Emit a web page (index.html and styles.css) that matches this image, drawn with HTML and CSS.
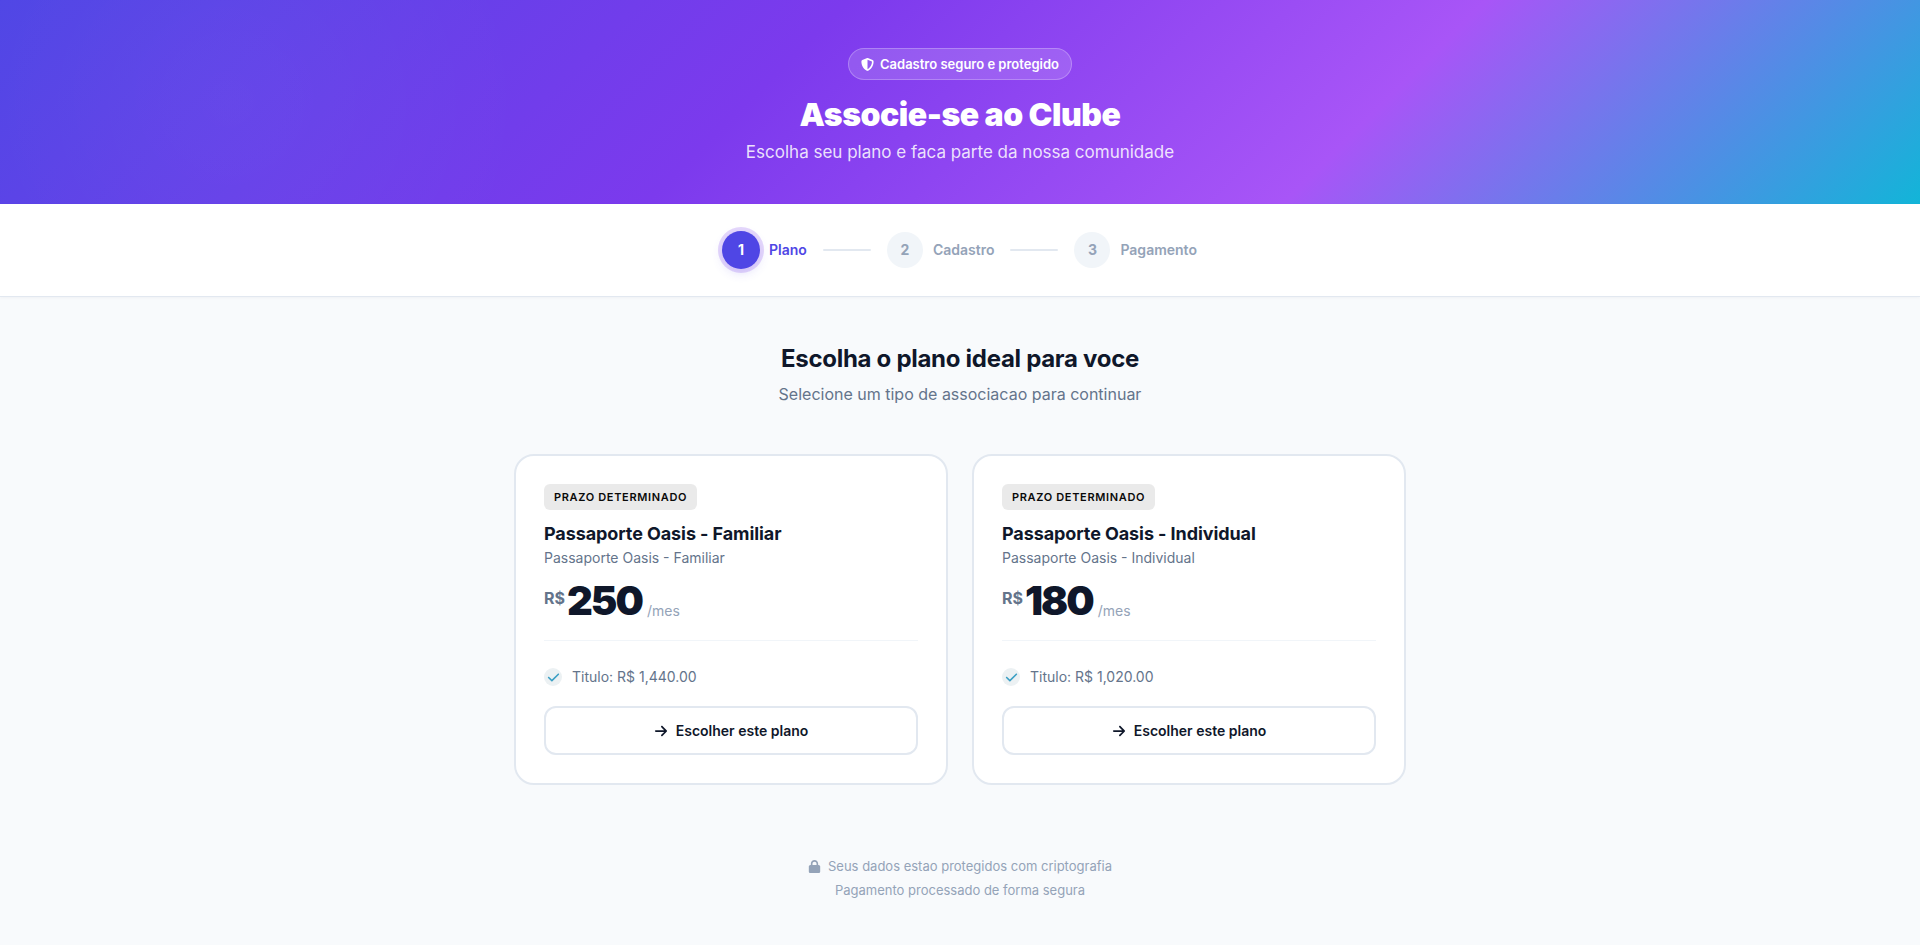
FILE: index.html
```html
<!DOCTYPE html>
<html lang="pt-BR">
<head>
  <meta charset="UTF-8">
  <meta name="viewport" content="width=device-width, initial-scale=1.0">
  <title>Associe-se ao Clube</title>
  <link rel="stylesheet" href="styles.css">
</head>
<body>
  <!-- icones reutilizados -->
  <svg class="sprite" aria-hidden="true">
    <symbol id="i-shield" viewBox="0 0 512 512"><path d="M256 0c4.6 0 9.2 1 13.4 2.9L457.7 82.8c22 9.3 38.4 31 38.3 57.2c-.5 99.2-41.3 280.7-213.6 363.2c-16.7 8-36.1 8-52.8 0C57.3 420.7 16.5 239.2 16 140c-.1-26.2 16.3-47.9 38.3-57.2L242.7 2.9C246.8 1 251.4 0 256 0zm0 66.8V444.8C394 378 431.1 230.1 432 141.4L256 66.8z"/></symbol>
    <symbol id="i-check" viewBox="0 0 448 512"><path d="M438.6 105.4c12.5 12.5 12.5 32.8 0 45.3l-256 256c-12.5 12.5-32.8 12.5-45.3 0l-128-128c-12.5-12.5-12.5-32.8 0-45.3s32.8-12.5 45.3 0L160 338.7 393.4 105.4c12.5-12.5 32.8-12.5 45.3 0z"/></symbol>
    <symbol id="i-arrow" viewBox="0 0 448 512"><path d="M438.6 278.6c12.5-12.5 12.5-32.8 0-45.3l-160-160c-12.5-12.5-32.8-12.5-45.3 0s-12.5 32.8 0 45.3L338.8 224 32 224c-17.7 0-32 14.3-32 32s14.3 32 32 32l306.7 0L233.4 393.4c-12.5 12.5-12.5 32.8 0 45.3s32.8 12.5 45.3 0l160-160z"/></symbol>
    <symbol id="i-lock" viewBox="0 0 448 512"><path d="M144 144v48H304V144c0-44.2-35.8-80-80-80s-80 35.8-80 80zM80 192V144C80 64.5 144.5 0 224 0s144 64.5 144 144v48h16c35.3 0 64 28.7 64 64V448c0 35.3-28.7 64-64 64H64c-35.3 0-64-28.7-64-64V256c0-35.3 28.7-64 64-64H80z"/></symbol>
  </svg>

  <header class="hero">
    <div class="hero-badge">
      <svg class="icon"><use href="#i-shield"/></svg>
      <span>Cadastro seguro e protegido</span>
    </div>
    <h1>Associe-se ao Clube</h1>
    <p>Escolha seu plano e faca parte da nossa comunidade</p>
  </header>

  <nav class="steps" aria-label="Etapas">
    <div class="step active">
      <span class="step-number">1</span>
      <span class="step-label">Plano</span>
    </div>
    <div class="step-line"></div>
    <div class="step">
      <span class="step-number">2</span>
      <span class="step-label">Cadastro</span>
    </div>
    <div class="step-line"></div>
    <div class="step">
      <span class="step-number">3</span>
      <span class="step-label">Pagamento</span>
    </div>
  </nav>

  <main class="container">
    <div class="section-title">
      <h2>Escolha o plano ideal para voce</h2>
      <p>Selecione um tipo de associacao para continuar</p>
    </div>

    <div class="plans">
      <article class="plan">
        <span class="plan-type">Prazo determinado</span>
        <h3>Passaporte Oasis - Familiar</h3>
        <p class="plan-desc">Passaporte Oasis - Familiar</p>
        <div class="price">
          <span class="currency">R$</span>
          <span class="value">250</span>
          <span class="period">/mes</span>
        </div>
        <ul class="features">
          <li><span class="check"><svg class="icon"><use href="#i-check"/></svg></span>Titulo: R$ 1,440.00</li>
        </ul>
        <button type="button" class="btn"><svg class="icon"><use href="#i-arrow"/></svg>Escolher este plano</button>
      </article>

      <article class="plan">
        <span class="plan-type">Prazo determinado</span>
        <h3>Passaporte Oasis - Individual</h3>
        <p class="plan-desc">Passaporte Oasis - Individual</p>
        <div class="price">
          <span class="currency">R$</span>
          <span class="value">180</span>
          <span class="period">/mes</span>
        </div>
        <ul class="features">
          <li><span class="check"><svg class="icon"><use href="#i-check"/></svg></span>Titulo: R$ 1,020.00</li>
        </ul>
        <button type="button" class="btn"><svg class="icon"><use href="#i-arrow"/></svg>Escolher este plano</button>
      </article>
    </div>
  </main>

  <footer class="footer">
    <p><svg class="icon"><use href="#i-lock"/></svg>Seus dados estao protegidos com criptografia</p>
    <p>Pagamento processado de forma segura</p>
  </footer>
</body>
</html>
```
FILE: styles.css
```css
* {
  margin: 0;
  padding: 0;
  box-sizing: border-box;
}
body {
  font-family: Inter, "Liberation Sans", sans-serif;
  background: #f8fafc;
  color: #0f172a;
  line-height: 24px;
}
.sprite {
  display: none;
}
.icon {
  width: 13px;
  height: 13px;
  fill: currentColor;
  flex-shrink: 0;
}

/* topo */
.hero {
  display: flex;
  flex-direction: column;
  align-items: center;
  padding: 48px 24px 40px;
  background:
    radial-gradient(circle at 12% 50%, rgba(255, 255, 255, 0.03), transparent 300px),
    linear-gradient(135deg, #4f46e5 0%, #7c3aed 40%, #a855f7 70%, #12b5d8 100%);
  color: #fff;
  text-align: center;
}
.hero-badge {
  display: flex;
  align-items: center;
  gap: 6px;
  height: 32px;
  padding: 0 12px;
  margin-bottom: 14px;
  border: 1px solid rgba(255, 255, 255, 0.25);
  border-radius: 16px;
  background: rgba(255, 255, 255, 0.15);
  font-size: 13px;
  font-weight: 600;
}
.hero h1 {
  font-size: 32px;
  line-height: 42px;
  font-weight: 900;
  letter-spacing: -0.015em;
  margin-bottom: 4px;
}
.hero p {
  font-size: 17px;
  color: rgba(255, 255, 255, 0.85);
}

/* etapas */
.steps {
  display: flex;
  justify-content: center;
  align-items: center;
  gap: 16px;
  padding: 28px 24px;
  background: #fff;
  border-bottom: 1px solid #e2e8f0;
  box-shadow: 0 1px 3px rgba(15, 23, 42, 0.04);
}
.step {
  display: flex;
  align-items: center;
  gap: 10px;
  color: #94a3b8;
  font-size: 14px;
  font-weight: 600;
}
.step-number {
  width: 36px;
  height: 36px;
  line-height: 36px;
  border-radius: 50%;
  background: #f1f5f9;
  text-align: center;
  font-weight: 700;
}
.step.active {
  color: #4f46e5;
}
.step.active .step-number {
  background: #4f46e5;
  color: #fff;
  box-shadow: 0 0 0 1px #4f46e5, 0 0 0 5px rgba(124, 58, 237, 0.2), 0 4px 12px rgba(79, 70, 229, 0.2);
}
.step-line {
  width: 48px;
  height: 2px;
  border-radius: 1px;
  background: #e2e8f0;
}

/* planos */
.container {
  max-width: 940px;
  margin: 0 auto;
  padding: 44px 24px 0;
}
.section-title {
  text-align: center;
  margin-bottom: 48px;
}
.section-title h2 {
  font-size: 24px;
  line-height: 36px;
  font-weight: 700;
  letter-spacing: -0.012em;
  margin-bottom: 5px;
}
.section-title p {
  font-size: 16px;
  color: #64748b;
}
.plans {
  display: grid;
  grid-template-columns: 1fr 1fr;
  gap: 24px;
}
.plan {
  display: flex;
  flex-direction: column;
  padding: 28px;
  background: #fff;
  border: 2px solid #e2e8f0;
  border-radius: 20px;
}
.plan-type {
  align-self: flex-start;
  padding: 4px 10px;
  margin-bottom: 12px;
  border-radius: 6px;
  background: #eaeaea;
  color: #0a0a0a;
  font-size: 11px;
  line-height: 18px;
  font-weight: 600;
  letter-spacing: 0.06em;
  text-transform: uppercase;
}
.plan h3 {
  font-size: 18px;
  font-weight: 700;
  letter-spacing: -0.005em;
}
.plan-desc {
  font-size: 14px;
  color: #64748b;
  margin-bottom: 9px;
}
.price {
  display: flex;
  align-items: flex-end;
  padding-bottom: 17px;
  margin-bottom: 24px;
  border-bottom: 1px solid #f1f5f9;
}
.currency {
  align-self: flex-start;
  font-size: 16px;
  font-weight: 700;
  color: #64748b;
  margin: 7px 2px 0 0;
}
.value {
  font-size: 40px;
  line-height: 44px;
  font-weight: 900;
  letter-spacing: -0.05em;
}
.period {
  font-size: 14px;
  color: #94a3b8;
  margin-left: 5px;
}
.features {
  list-style: none;
  margin-bottom: 17px;
}
.features li {
  display: flex;
  align-items: center;
  gap: 10px;
  font-size: 14px;
  color: #64748b;
}
.check {
  display: flex;
  align-items: center;
  justify-content: center;
  width: 18px;
  height: 18px;
  border-radius: 50%;
  background: #ecf1f3;
  color: #3b9fc4;
}
.btn {
  display: flex;
  align-items: center;
  justify-content: center;
  gap: 8px;
  padding: 12px;
  background: #fff;
  border: 2px solid #e2e8f0;
  border-radius: 12px;
  font-family: inherit;
  font-size: 14px;
  line-height: 21px;
  font-weight: 600;
  color: #0f172a;
  cursor: pointer;
}
.btn .icon {
  width: 14px;
  height: 14px;
}

/* rodape */
.footer {
  padding: 69px 24px 40px;
  text-align: center;
  font-size: 13px;
  color: #94a3b8;
}
.footer p {
  display: flex;
  align-items: center;
  justify-content: center;
  gap: 7px;
}
```
